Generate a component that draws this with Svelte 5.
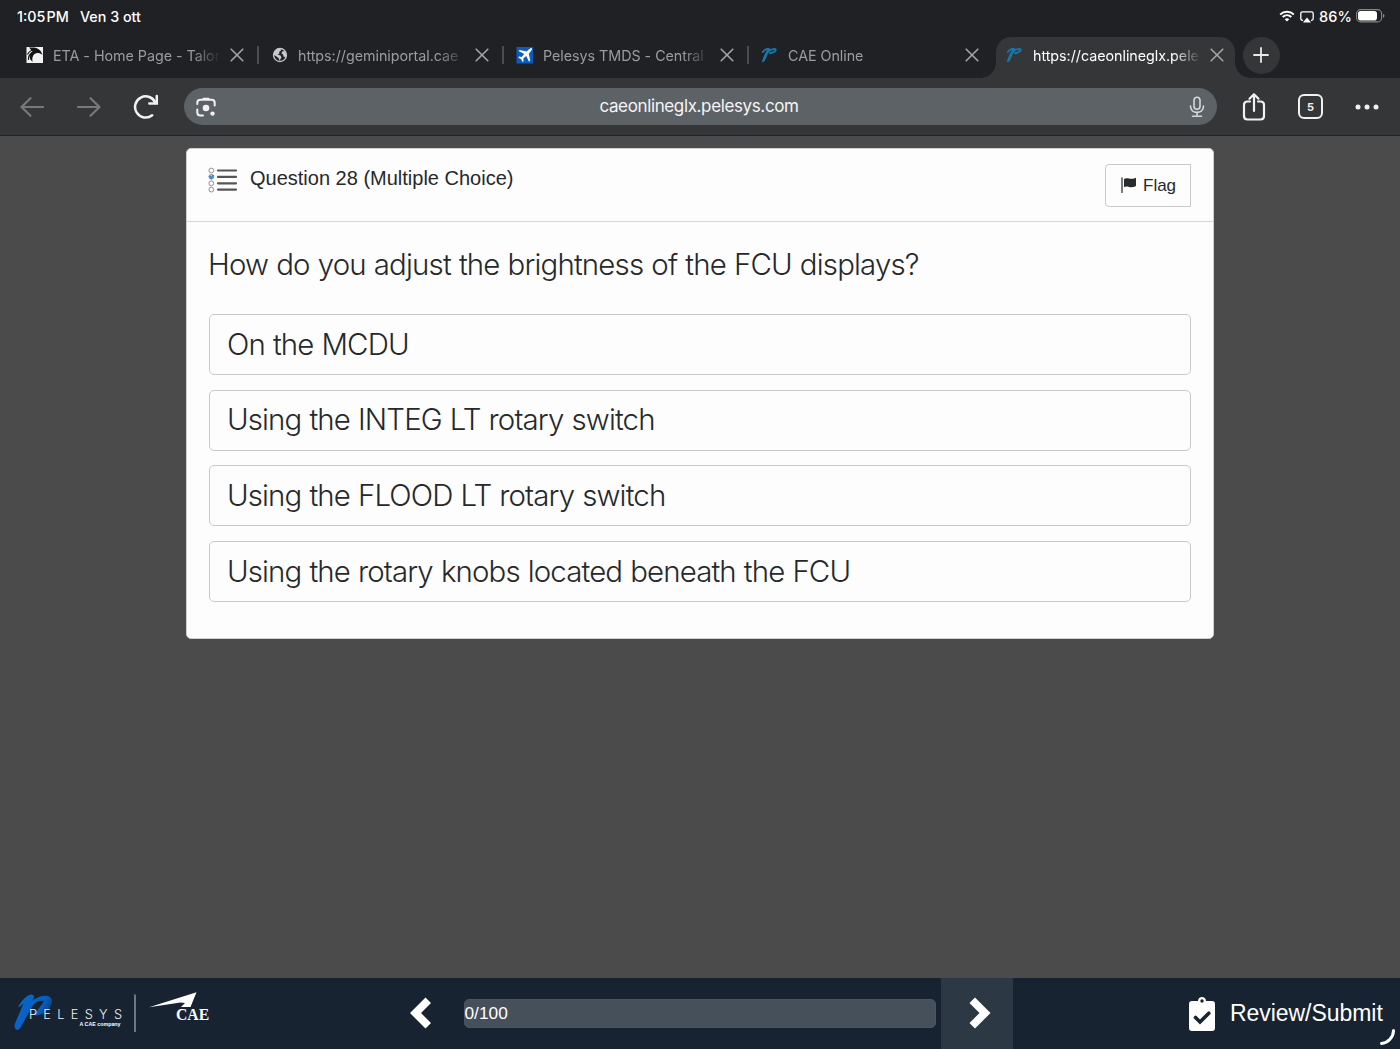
<script>
  const tabs = [
    { icon: 'eta', title: 'ETA - Home Page - Talon' },
    { icon: 'globe', title: 'https://geminiportal.cae' },
    { icon: 'plane', title: 'Pelesys TMDS - Central' },
    { icon: 'pelesys', title: 'CAE Online' },
    { icon: 'pelesys', title: 'https://caeonlineglx.pele', active: true }
  ];
  const options = [
    'On the MCDU',
    'Using the INTEG LT rotary switch',
    'Using the FLOOD LT rotary switch',
    'Using the rotary knobs located beneath the FCU'
  ];
</script>

{#snippet favicon(name)}
  {#if name === 'eta'}
    <svg width="18" height="18" viewBox="0 0 18 18">
      <rect x="0.5" y="1" width="16.5" height="16" fill="#f2f2f2" />
      <path d="M3 1.500H8C12 2 15.500 4.500 16.500 9 13.500 6.500 11 6.500 8.500 8 6.500 10 6 13 6.500 16L4 13C3 9 4 7 6.500 5.500Z" fill="#151515" />
      <path d="M1.500 8.500C3 5.500 5 4 8 4M2.500 14C2 10.500 4 7.500 7.500 6" stroke="#151515" stroke-width="1.200" fill="none" />
      <circle cx="11" cy="12" r="4.300" fill="#f2f2f2" />
    </svg>
  {:else if name === 'globe'}
    <svg width="18" height="18" viewBox="0 0 18 18">
      <circle cx="9" cy="9" r="6.500" fill="#202124" stroke="#c8c9cb" stroke-width="1.300" />
      <path d="M3 6.500 6 3 9.500 2.500 10 4.500 8 6 8.500 7.500 6.500 8.500 9.500 9.500 10.500 11.500 8.500 14.500 7.500 12 5.500 10.500 3 9Z" fill="#c8c9cb" />
      <path d="M11 5.500 14 5 15.500 8.500 14.500 11.500 12.500 10.500 12 8.500 10.500 7.500Z" fill="#c8c9cb" />
    </svg>
  {:else if name === 'plane'}
    <svg width="18" height="18" viewBox="0 0 18 18">
      <rect x="0.500" y="1" width="16.500" height="16.500" fill="#0b5cbd" />
      <path d="M16 2.300C14.800 1.900 13.500 2.700 12.500 3.700L10.700 5.400 3.700 3.900 2.500 5 8.300 8 5.700 10.900 3 10.600 2.200 11.500 5.100 13.200 6.700 16 7.600 15.200 7.300 12.600 10.200 10 13 15.700 14.200 14.600 12.800 7.500 14.500 5.700C15.500 4.700 16.200 3.500 16 2.300Z" fill="#fff" />
    </svg>
  {:else}
    <svg width="18" height="18" viewBox="0 0 18 18">
      <path d="M0.800 15.800C2.300 11.500 3.800 7 6.800 3 8.500 2.300 9.300 3.300 8.500 4.500 7 7 6 10 4.400 13.500 3.300 15.800 1.500 16.800 0.800 15.800Z" fill="#1976ad" />
      <path d="M1.800 6C4 3.200 7 2 8.300 3.200M7.500 5.500C9.500 3.200 15.300 1.900 14.700 4.200 14 5.900 11.500 6.800 9 7.300" stroke="#1976ad" stroke-width="1.900" fill="none" stroke-linecap="round" />
    </svg>
  {/if}
{/snippet}

<div class="screen">
  <div class="status">
    <span class="time">1:05&#8202;PM</span><span class="date">Ven 3 ott</span>
    <div class="indicators">
      <svg width="16" height="12" viewBox="0 0 16 12" fill="none" stroke="#fff">
        <path d="M1.200 4.500C5 0.900 11 0.900 14.800 4.500M3.700 7C6.200 4.600 9.800 4.600 12.300 7" stroke-width="2" />
        <path d="M8 11.500 5.700 9.200C7 8 9 8 10.300 9.200Z" fill="#fff" stroke="none" />
      </svg>
      <svg class="cast" width="14" height="12" viewBox="0 0 14 12">
        <path d="M3 9.300H2.500Q0.800 9.300 0.800 7.600V2.500Q0.800 0.800 2.500 0.800H11.500Q13.200 0.800 13.200 2.500V7.600Q13.200 9.300 11.500 9.300H11" stroke="#fff" stroke-width="1.300" fill="none" />
        <path d="M7 6.500 11 11.500H3Z" fill="#fff" />
      </svg>
      <span class="percent">86%</span>
      <svg class="battery" width="29" height="14" viewBox="0 0 29 14">
        <rect x="0.600" y="0.600" width="25" height="12.300" rx="4" fill="none" stroke="#85868a" stroke-width="1.100" />
        <rect x="2" y="2" width="19" height="9.500" rx="2.800" fill="#fff" />
        <path d="M27 4.700Q28.500 5.500 28.500 6.800 28.500 8 27 8.900Z" fill="#85868a" />
      </svg>
    </div>
  </div>

  <div class="tabs">
    {#each tabs as tab, i}
      <div class="tab" class:active={tab.active} class:divided={i < 3}>
        {@render favicon(tab.icon)}
        <span class="title">{tab.title}</span>
        <svg class="close" width="14" height="14" viewBox="0 0 14 14"><path d="M1.200 1.200 12.800 12.800M12.800 1.200 1.200 12.800" /></svg>
      </div>
    {/each}
    <div class="new-tab">
      <svg width="16" height="16" viewBox="0 0 16 16"><path d="M8 1V15M1 8H15" stroke="#e8e9ea" stroke-width="1.800" stroke-linecap="round" /></svg>
    </div>
  </div>

  <div class="toolbar">
    <svg class="nav" width="24" height="20" viewBox="0 0 24 20"><path d="M23 10H1.500M10.500 1.200 1.500 10 10.500 18.800" /></svg>
    <svg class="nav forward" width="24" height="20" viewBox="0 0 24 20"><path d="M1 10H22.500M13.500 1.200 22.500 10 13.500 18.800" /></svg>
    <svg class="reload" width="26" height="26" viewBox="0 0 26 26" fill="none" stroke="#f1f1f2" stroke-width="2.500" stroke-linecap="round">
      <path d="M19.200 21.300A10.600 10.600 0 1 1 22.500 9" /><path d="M23.800 2V9.500H16.300" />
    </svg>
    <div class="address">
      <svg class="lens" width="20" height="20" viewBox="0 0 20 20">
        <path d="M1.300 7V5.800Q1.300 2.700 4.400 2.700H15.600Q18.700 2.700 18.700 5.800V8.500M1.300 12.500V15.500Q1.300 18.600 4.400 18.600H7" fill="none" stroke="#f1f1f2" stroke-width="2" stroke-linecap="round" />
        <path d="M5.500 3 7.200 0.700H12.800L14.500 3Z" fill="#f1f1f2" />
        <circle cx="10" cy="11" r="3.300" fill="#f1f1f2" /><circle cx="16.500" cy="16.600" r="2.200" fill="#f1f1f2" />
      </svg>
      <span>caeonlineglx.pelesys.com</span>
      <svg class="mic" width="16" height="22" viewBox="0 0 16 22" fill="none" stroke="#d5d7d9" stroke-width="1.600" stroke-linecap="round">
        <rect x="5" y="1.300" width="6" height="12" rx="3" /><path d="M1.500 10C1.500 18.500 14.500 18.500 14.500 10M8 16.500V20M3.500 20.200H12.500" />
      </svg>
    </div>
    <svg class="share" width="24" height="28" viewBox="0 0 24 28" fill="none" stroke="#f1f1f2" stroke-width="2.200" stroke-linecap="round" stroke-linejoin="round">
      <path d="M8 8.500H5.500Q2 8.500 2 12V23Q2 26.500 5.500 26.500H18.500Q22 26.500 22 23V12Q22 8.500 18.500 8.500H16M12 18V1.500M7.500 5.800 12 1.300 16.500 5.800" />
    </svg>
    <div class="count">5</div>
    <svg class="more" width="24" height="6" viewBox="0 0 24 6" fill="#f1f1f2"><circle cx="3" cy="3" r="2.500" /><circle cx="12" cy="3" r="2.500" /><circle cx="21" cy="3" r="2.500" /></svg>
  </div>

  <main>
    <section class="card">
      <header>
        <svg class="list" width="30" height="26" viewBox="0 0 30 26">
          <circle cx="3.300" cy="9.800" r="2.400" fill="#b5d5f5" />
          <g fill="none" stroke="#858585" stroke-width="0.900"><circle cx="3.300" cy="3.500" r="2.400" /><circle cx="3.300" cy="9.800" r="2.400" /><circle cx="3.300" cy="16.300" r="2.400" /><circle cx="3.300" cy="22.600" r="2.400" /></g>
          <path d="M1.500 9 3.200 11 5.500 8" fill="none" stroke="#2f83dc" stroke-width="1.800" />
          <path d="M10 3.500H28M10 9.900H28M10 16.300H28M10 22.600H28" stroke="#555" stroke-width="2.200" stroke-linecap="round" />
        </svg>
        <h1>Question 28 (Multiple Choice)</h1>
        <div class="flag">
          <svg width="16" height="17" viewBox="0 0 16 17"><path d="M1 0.500V16" stroke="#333638" stroke-width="1.300" /><path d="M3 2C6 -0.500 9.500 3.500 15 0.800V9C9.500 12 7 8 3 10Z" fill="#292c2e" /></svg>
          <span>Flag</span>
        </div>
      </header>
      <p class="question">How do you adjust the brightness of the FCU displays?</p>
      <div class="options">
        {#each options as option}
          <div class="option">{option}</div>
        {/each}
      </div>
    </section>
  </main>

  <footer>
    <div class="brands">
      <svg width="212" height="70" viewBox="0 0.500 212 70">
        <defs><linearGradient id="ribbon" x1="0" y1="0" x2="1" y2="0.500"><stop offset="0" stop-color="#0869ce" /><stop offset="0.700" stop-color="#075fc0" /><stop offset="1" stop-color="#123864" /></linearGradient></defs>
        <path d="M18.500 29C21 24 26 18 31 17 34.500 17 35 19 32.500 23 38 19 44 17.500 48 18.500 54 21 52.500 26 49 31 46 35 42 37 36 38L34 37C37 33 41 29 44 23.500 38 22 34 26 31 31L20 51 17.500 52.500Q13.500 52 15 46L23.500 26 18.500 30Z" fill="url(#ribbon)" />
        <text x="29" y="41.500" class="pelesys">PELESYS</text>
        <text x="79.500" y="48.700" class="company">A CAE company</text>
        <path d="M135 17V54.500" stroke="#8b939c" stroke-width="1.500" />
        <path d="M149 29.700 196.500 14.800 190.500 29.500H181L185 25.500 180.500 25Z" fill="#fff" />
        <text x="176" y="42.500" class="cae">CAE</text>
      </svg>
    </div>
    <div class="pager">
      <svg width="24" height="32" viewBox="0 0 24 32"><path d="M16.500 0.500 22 6 12 16 22 26 16.500 31.500 1 16Z" fill="#fff" /></svg>
    </div>
    <div class="progress">0/100</div>
    <div class="pager next">
      <svg width="24" height="32" viewBox="0 0 24 32"><path d="M7 0.500 1.500 6 11.500 16 1.500 26 7 31.500 22.500 16Z" fill="#fff" /></svg>
    </div>
    <div class="submit">
      <svg width="28" height="36" viewBox="0 0 28 36">
        <path d="M4 5H10C10 -0.500 18 -0.500 18 5H24Q27 5 27 8V32Q27 35 24 35H4Q1 35 1 32V8Q1 5 4 5Z" fill="#fff" />
        <circle cx="14" cy="5" r="1.700" fill="#182331" /><path d="M7.500 21.500 12 26 20.800 17.200" fill="none" stroke="#182331" stroke-width="3.600" stroke-linecap="round" />
      </svg>
      <span>Review/Submit</span>
    </div>
    <svg class="corner" width="18" height="18" viewBox="0 0 18 18"><path d="M2.500 15.500C9 15 14.500 9 14.500 2.500" fill="none" stroke="#fff" stroke-width="3" stroke-linecap="round" /></svg>
  </footer>
</div>

<style>
  :global(body) { margin: 0; }
  .screen { width: 1400px; height: 1049px; display: flex; flex-direction: column; overflow: hidden; background: #4b4b4b; font-family: Inter, "Liberation Sans", sans-serif; }
  .screen * { box-sizing: border-box; }
  svg { flex: none; display: block; }
  .status { height: 37px; flex: none; background: #202124; color: #fff; display: flex; align-items: center; padding: 0 15px 5px 17px; font-size: 14.300px; font-weight: 500; }
  .time { width: 63px; white-space: nowrap; }
  .indicators { margin-left: auto; display: flex; align-items: center; }
  .cast { margin: 1px 5px 0 5px; }
  .percent { width: 37px; font-size: 14.500px; letter-spacing: 0.100px; }
  .tabs { height: 41px; flex: none; background: #202124; display: flex; padding-left: 14px; }
  .tab { width: 245px; height: 41px; position: relative; display: flex; align-items: center; padding: 0 15.500px 5px 12px; color: #9b9ca0; font-size: 14.300px; }
  .title { width: 166px; margin-left: 9px; overflow: hidden; white-space: nowrap; letter-spacing: -0.030px; mask-image: linear-gradient(to right, #000 140px, transparent 168px); }
  .close { margin-left: auto; }
  .close path { stroke: #a3a4a7; stroke-width: 1.600; stroke-linecap: round; }
  .divided::after { content: ''; position: absolute; left: 243px; top: 9px; width: 2px; height: 18px; background: #4b4c50; }
  .active { color: #fff; isolation: isolate; }
  .active::before { content: ''; position: absolute; z-index: -1; left: 2px; right: 4px; top: 0; bottom: 0; border-radius: 15px 15px 0 0; background: #353638; }
  .active::after { content: ''; position: absolute; z-index: -2; left: -13px; right: -11px; bottom: 0; height: 15px; background: radial-gradient(circle at 0 0, transparent 14.500px, #353638 15px) left / 15px 15px no-repeat, radial-gradient(circle at 100% 0, transparent 14.500px, #353638 15px) right / 15px 15px no-repeat; }
  .new-tab { width: 37px; height: 37px; border-radius: 50%; margin-left: 4px; background: #353638; display: grid; place-items: center; }
  .new-tab svg { margin: 0 1px 1px 0; }
  .toolbar { height: 58px; flex: none; background: #353638; border-bottom: 1px solid #222325; display: flex; align-items: center; padding: 0 20px; }
  .nav { fill: none; stroke: #78797b; stroke-width: 2.200; stroke-linecap: round; stroke-linejoin: round; }
  .forward { margin-left: 33px; }
  .reload { margin-left: 32px; }
  .address { width: 1033px; height: 37px; margin-left: 24.500px; border-radius: 19px; background: #5d6266; display: flex; align-items: center; justify-content: space-between; padding: 0 12px; color: #f5f5f6; font-size: 17px; }
  .address span { width: 210px; margin-left: -6px; padding-bottom: 2px; text-align: center; white-space: nowrap; letter-spacing: -0.370px; }
  .share { margin-left: 25.500px; }
  .count { width: 25px; height: 25px; margin-left: 32px; border: 2px solid #f1f1f2; border-radius: 6px; color: #f1f1f2; display: grid; place-items: center; font-size: 11px; font-weight: 700; }
  .more { margin-left: 32px; }
  main { flex: 1; padding: 12px 186px 0; }
  .card { height: 491px; background: #fdfdfd; border: 1px solid #cfcfcf; border-radius: 5px; color: #26292b; }
  header { height: 73px; border-bottom: 1px solid #d5d5d5; display: flex; align-items: flex-start; padding: 15px 22px 0 21px; }
  .list { margin-top: 3px; }
  h1 { margin: 2px 0 0 12px; font: 400 20px/24px "Liberation Sans", Arial, sans-serif; white-space: nowrap; }
  .flag { width: 86px; height: 43px; margin-left: auto; border: 1px solid #c9c9c9; border-radius: 4px 0 0 4px; display: flex; align-items: center; padding-left: 15px; font: 17px "Liberation Sans", Arial, sans-serif; }
  .flag span { margin-left: 6px; }
  .question { margin: 0; height: 92px; padding: 24px 22px 0 21px; font-size: 29.400px; line-height: 38px; font-weight: 300; letter-spacing: -0.820px; word-spacing: 0.600px; white-space: nowrap; }
  .options { padding: 0 22px; display: grid; gap: 14.700px; }
  .option { height: 61px; border: 1px solid #c9c9c9; border-radius: 5px; display: flex; align-items: center; padding: 0 0 1px 17px; font-size: 29.400px; font-weight: 300; letter-spacing: -0.850px; word-spacing: 0.600px; white-space: nowrap; }
  footer { height: 71px; flex: none; position: relative; background: #182331; color: #fff; display: flex; align-items: center; font-family: "Liberation Sans", Arial, sans-serif; }
  .brands { width: 385px; height: 71px; }
  .pelesys { font: 300 12.800px Inter, sans-serif; letter-spacing: 6.300px; fill: #f0f2f4; }
  .company { font: 700 5.300px "Liberation Sans", sans-serif; fill: #fff; }
  .cae { font: 700 15.700px "Liberation Serif", serif; fill: #fff; }
  .pager { width: 72px; height: 71px; padding-bottom: 1px; display: grid; place-items: center; }
  .progress { width: 472px; height: 29px; margin: 0 5px 0 7px; border: 1px solid #4d5660; border-radius: 5px; background: #46505a; font-size: 17.300px; line-height: 27px; text-indent: -0.500px; }
  .next { background: #2d3845; padding-left: 5px; }
  .submit { margin-left: 175px; display: flex; align-items: center; font-size: 23px; white-space: nowrap; }
  .submit span { margin-left: 14px; letter-spacing: -0.050px; }
  .corner { position: absolute; right: 3px; bottom: 3px; }
</style>
